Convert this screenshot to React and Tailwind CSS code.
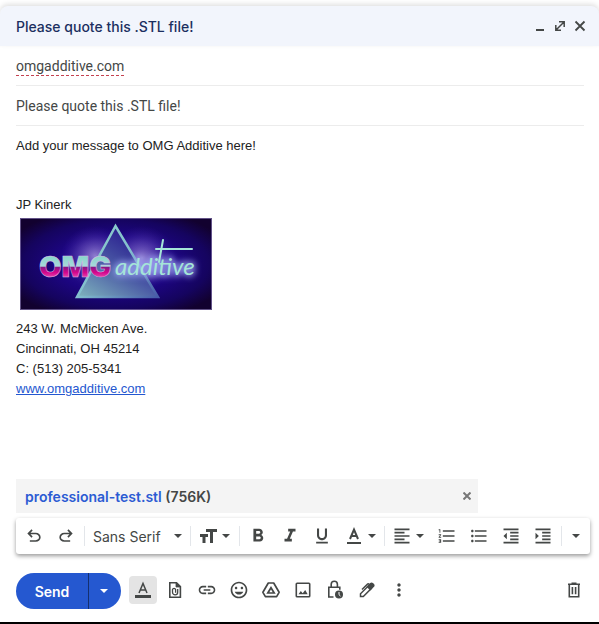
import {
  MdFormatAlignLeft,
  MdFormatBold,
  MdFormatIndentDecrease,
  MdFormatIndentIncrease,
  MdFormatItalic,
  MdFormatListBulleted,
  MdFormatListNumbered,
  MdFormatUnderlined,
  MdLink,
  MdMoreVert,
  MdOutlineInsertEmoticon,
} from "react-icons/md";

const ui = "font-['Inter','Liberation_Sans',sans-serif]";

function Caret({ className = "" }) {
  return (
    <svg viewBox="0 0 8 4" className={`h-1 w-2 shrink-0 ${className}`} fill="currentColor">
      <path d="M0 0h8L4 4z" />
    </svg>
  );
}

function Tool({ label, className = "w-8", children }) {
  return (
    <button type="button" aria-label={label} className={`flex h-7 shrink-0 items-center justify-center ${className}`}>
      {children}
    </button>
  );
}

function Divider() {
  return <span className="h-5 w-px shrink-0 bg-[#e3e6ea]" />;
}

function UndoIcon({ flip }) {
  return (
    <svg viewBox="0 -960 960 960" className={`size-5 ${flip ? "-scale-x-100" : ""}`} fill="currentColor">
      <path d="M280-200v-80h284q63 0 109.5-40T720-420q0-60-46.5-100T564-560H312l104 104-56 56-200-200 200-200 56 56-104 104h252q97 0 166.5 63T800-420q0 94-69.5 157T564-200H280Z" />
    </svg>
  );
}

function SizeIcon() {
  return (
    <svg viewBox="0 0 18 14" className="h-[14px] w-[18px]" fill="currentColor">
      <path d="M6 0h11v3h-4v11h-3V3H6zM0 5h8v3H5.500v6H2.500V8H0z" />
    </svg>
  );
}

function TextColorIcon({ light }) {
  return (
    <svg viewBox="0 0 20 20" className="size-5" fill="none" stroke="currentColor">
      <path d="M6 13 10 3.500 14 13M7.300 10h5.400" strokeWidth={light ? 1.500 : 2} />
      <path d={light ? "M2 16.500h16" : "M3 17h14"} strokeWidth={light ? 3 : 2} />
    </svg>
  );
}

function AttachIcon() {
  return (
    <svg viewBox="0 0 20 20" className="size-5" fill="none" stroke="currentColor" strokeWidth="1.600">
      <path d="M4.800 2.800h6.700l3.900 3.900v10.500H4.800z" />
      <path d="M11 2.500v4.500h4.700z" fill="currentColor" strokeWidth="0.800" />
      <path d="M12.700 9v3.300a2.600 2.600 0 0 1-5.200 0V9.500a1.600 1.600 0 0 1 3.100 0v3.300" strokeWidth="1.300" />
    </svg>
  );
}

function DriveIcon() {
  return (
    <svg viewBox="0 0 20 20" className="size-5" fill="none" stroke="currentColor" strokeWidth="1.700" strokeLinejoin="round">
      <path d="M7.300 3h5.400l5.400 9.300-2.500 4.400H4.400l-2.500-4.400z" />
      <path d="M10 7.700 13.200 13H6.800z" strokeLinejoin="miter" />
    </svg>
  );
}

function PhotoIcon() {
  return (
    <svg viewBox="0 0 20 20" className="size-5" fill="none" stroke="currentColor" strokeWidth="1.600">
      <rect x="3.300" y="3.300" width="13.400" height="13.400" rx="0.800" />
      <path d="m5.500 14.300 2.300-3.300 1.900 2.200 2.500-3.200 2.500 4.300z" fill="currentColor" stroke="none" />
    </svg>
  );
}

function LockClockIcon() {
  return (
    <svg viewBox="0 0 20 20" className="size-5" fill="none" stroke="currentColor" strokeWidth="1.600">
      <path d="M8.500 17H3.800V7.300h11v2.400" />
      <path d="M6.200 7V4.300a3.100 3.100 0 0 1 6.200 0V7" />
      <circle cx="14" cy="14.500" r="4" fill="currentColor" stroke="none" />
      <path d="M14 12v2.700l1.500 1.400" stroke="white" strokeWidth="1" />
    </svg>
  );
}

function PenIcon() {
  return (
    <svg viewBox="0 0 20 20" className="size-5" fill="none" stroke="currentColor" strokeWidth="1.500">
      <path d="M3.500 16.500v-2.800l8-8 2.800 2.800-8 8z" />
      <path d="m10.500 6.700 3.200-3.200a1.200 1.200 0 0 1 1.700 0l1.100 1.100a1.200 1.200 0 0 1 0 1.700l-3.200 3.200z" fill="currentColor" />
      <path d="m5 9.500 5.300-5.300q.9-.9 1.800 0l.8.800" />
    </svg>
  );
}

function TrashIcon() {
  return (
    <svg viewBox="0 0 20 20" className="size-5" fill="none" stroke="currentColor" strokeWidth="1.600">
      <path d="M4 4.300h12M7.500 3.300h5M5.300 4.500v12.200h9.400V4.500" />
      <path d="M8.400 7v7.300M11.600 7v7.300" />
    </svg>
  );
}

function Logo() {
  return (
    <svg viewBox="0 0 192 92" className="h-[92px] w-[192px]" role="img" aria-label="OMG additive">
      <defs>
        <radialGradient id="sky" cx="50%" cy="50%" r="62%">
          <stop offset="0" stopColor="#3a259f" />
          <stop offset="0.500" stopColor="#1c0580" />
          <stop offset="0.780" stopColor="#15045f" />
          <stop offset="1" stopColor="#12012f" />
        </radialGradient>
        <radialGradient id="glow">
          <stop offset="0" stopColor="#c5b4f0" stopOpacity="0.650" />
          <stop offset="0.500" stopColor="#8b70d8" stopOpacity="0.350" />
          <stop offset="1" stopColor="#4526b0" stopOpacity="0" />
        </radialGradient>
        <linearGradient id="face" x1="0" y1="1" x2="0.700" y2="0">
          <stop offset="0" stopColor="#7fb5bd" />
          <stop offset="0.500" stopColor="#4a59a5" />
          <stop offset="1" stopColor="#22108a" />
        </linearGradient>
        <linearGradient id="edge" x1="0" y1="0" x2="1" y2="1">
          <stop offset="0" stopColor="#8ed2c9" />
          <stop offset="0.500" stopColor="#83bfce" />
          <stop offset="1" stopColor="#465aa8" />
        </linearGradient>
        <linearGradient id="chrome" gradientUnits="userSpaceOnUse" x1="0" y1="38" x2="0" y2="60">
          <stop offset="0" stopColor="#86d5c9" />
          <stop offset="0.460" stopColor="#a8d9da" />
          <stop offset="0.520" stopColor="#8b1685" />
          <stop offset="0.750" stopColor="#d5068d" />
          <stop offset="1" stopColor="#e64fae" />
        </linearGradient>
        <filter id="halo" x="-20%" y="-50%" width="140%" height="200%">
          <feGaussianBlur stdDeviation="3" />
        </filter>
      </defs>
      <rect width="192" height="92" fill="url(#sky)" />
      <ellipse cx="75" cy="38" rx="34" ry="30" fill="url(#glow)" />
      <ellipse cx="122" cy="40" rx="34" ry="32" fill="url(#glow)" />
      <path d="M95.500 8 57 79h81z" fill="url(#face)" stroke="url(#edge)" strokeWidth="2.500" />
      <g fontFamily="Lato, sans-serif" fontStyle="italic" fontSize="24">
        <text x="95" y="57" fill="#b8c8ff" stroke="#a9b4ff" strokeWidth="4" opacity="0.700" filter="url(#halo)">additive</text>
        <text x="95" y="57" fill="#a5e5d8">additive</text>
      </g>
      <path d="M136 31h36M143 22l-4 22" stroke="#a5e5d8" strokeWidth="2" strokeLinecap="round" />
      <text x="19" y="59" fontFamily="Inter, sans-serif" fontWeight="900" fontSize="29" fill="url(#chrome)" stroke="#d9b9e6" strokeWidth="0.500">
        OMG
      </text>
      <rect x="0.500" y="0.500" width="191" height="91" fill="none" stroke="#8475ad" strokeOpacity="0.700" />
    </svg>
  );
}

export default function App() {
  return (
    <div className={`flex min-h-screen flex-col border-b-2 border-black bg-white pt-[6px] text-[#444746] ${ui}`}>
      <header className="flex h-10 items-center justify-between rounded-t-lg bg-[#f2f5fc] pr-[9px] pl-4 shadow-[0_-2px_5px_rgba(0,0,0,0.12)]">
        <h1 className="text-[14px] font-medium text-[#1b2f60]">Please quote this .STL file!</h1>
        <div className="flex">
          <button type="button" aria-label="Minimize" className="flex size-5 items-center justify-center">
            <svg viewBox="0 0 12 12" className="size-3"><path d="M2 9h8v2H2z" fill="currentColor" /></svg>
          </button>
          <button type="button" aria-label="Full screen" className="flex size-5 items-center justify-center">
            <svg viewBox="0 0 12 12" className="size-3" fill="none" stroke="currentColor" strokeWidth="1.500">
              <path d="M5 1.800h5.200V7M1.800 5v5.200H7M10 2 2 10" />
            </svg>
          </button>
          <button type="button" aria-label="Close" className="flex size-5 items-center justify-center">
            <svg viewBox="0 0 12 12" className="size-3" fill="none" stroke="currentColor" strokeWidth="1.800">
              <path d="m1.500 1.500 9 9M10.500 1.500l-9 9" />
            </svg>
          </button>
        </div>
      </header>

      <div className="mr-[15px] ml-4 flex h-10 items-center border-b border-[#ececec] pt-[2px] font-['Roboto',sans-serif] text-[14px]">
        <span className="border-b border-dashed border-[#c5404f] leading-[18px]">omgadditive.com</span>
      </div>
      <div className="mr-[15px] ml-4 flex h-10 items-center border-b border-[#ececec] pt-[2px] font-['Roboto',sans-serif]">
        <input aria-label="Subject" defaultValue="Please quote this .STL file!" className="w-full text-[14px] outline-none" />
      </div>

      <main className="flex-1 px-4 pt-[10px] font-['Liberation_Sans',Arial,sans-serif] text-[13px] leading-5 text-[#222222]">
        <p>Add your message to OMG Additive here!</p>
        <div className="mt-[39px]">
          <p>JP Kinerk</p>
          <div className="mt-[3px] mb-[9px] pl-1">
            <Logo />
          </div>
          <p>243 W. McMicken Ave.</p>
          <p>Cincinnati, OH 45214</p>
          <p>C: (513) 205-5341</p>
          <a href="#site" className="text-[#2457d0] underline">www.omgadditive.com</a>
        </div>
      </main>

      <div className="ml-4 flex h-[34px] max-w-[462px] items-center justify-between bg-[#f4f4f4] pr-[6px] pl-[9px] text-[14px] font-semibold">
        <span>
          <a href="#file" className="text-[#2b5bd3]">professional-test.stl</a> (756K)
        </span>
        <button type="button" aria-label="Remove attachment" className="flex h-5 w-[10px] items-center justify-center text-[#777777]">
          <svg viewBox="0 0 8 8" className="size-2 shrink-0" fill="none" stroke="currentColor" strokeWidth="2">
            <path d="m0.500 0.500 7 7M7.500 0.500l-7 7" />
          </svg>
        </button>
      </div>

      <div className="mt-[5px] mr-[9px] ml-4 flex h-9 items-center justify-between rounded-[3px] bg-white pr-[6px] pl-[2px] shadow-[0_2px_4px_rgba(0,0,0,0.4)]">
        <div className="flex items-center">
          <Tool label="Undo"><UndoIcon /></Tool>
          <Tool label="Redo"><UndoIcon flip /></Tool>
          <span className="w-[2px]" />
          <Divider />
          <button type="button" className="flex h-7 w-[105px] items-center justify-between pr-2 pl-2 text-[14px]">
            Sans Serif <Caret />
          </button>
          <Divider />
          <Tool label="Size" className="w-12 gap-1"><SizeIcon /><Caret /></Tool>
          <Divider />
          <span className="w-[2px]" />
          <Tool label="Bold"><MdFormatBold size={22} /></Tool>
          <Tool label="Italic"><MdFormatItalic size={22} /></Tool>
          <Tool label="Underline"><MdFormatUnderlined size={20} /></Tool>
          <Tool label="Text color" className="w-11 gap-1"><TextColorIcon /><Caret /></Tool>
          <span className="w-[2px]" />
          <Divider />
          <Tool label="Align" className="w-[46px] gap-1"><MdFormatAlignLeft size={20} /><Caret /></Tool>
          <Tool label="Numbered list"><MdFormatListNumbered size={20} /></Tool>
          <Tool label="Bulleted list"><MdFormatListBulleted size={20} /></Tool>
          <Tool label="Indent less"><MdFormatIndentDecrease size={20} /></Tool>
          <Tool label="Indent more"><MdFormatIndentIncrease size={20} /></Tool>
        </div>
        <div className="flex items-center">
          <Divider />
          <Tool label="More formatting" className="w-[22px] pl-[6px]"><Caret /></Tool>
        </div>
      </div>

      <footer className="mt-[19px] mb-[13px] flex h-9 items-center pr-[9px] pl-4">
        <div className="mr-2 flex h-9 overflow-hidden rounded-full bg-[#2558d0] text-white">
          <button type="button" className="w-[72px] text-[14px] font-semibold">Send</button>
          <button type="button" aria-label="More send options" className="flex w-[33px] items-center border-l border-[#15306f] pl-[11px]">
            <Caret />
          </button>
        </div>
        <div className="flex flex-1 items-center pb-[2px]">
          <button type="button" aria-label="Formatting options" className="mr-[2px] flex size-7 items-center justify-center rounded bg-[#e4e4e4]">
            <TextColorIcon light />
          </button>
          <Tool label="Attach files"><AttachIcon /></Tool>
          <Tool label="Insert link"><MdLink size={20} /></Tool>
          <Tool label="Insert emoji"><MdOutlineInsertEmoticon size={20} /></Tool>
          <Tool label="Insert from Drive"><DriveIcon /></Tool>
          <Tool label="Insert photo"><PhotoIcon /></Tool>
          <Tool label="Confidential mode"><LockClockIcon /></Tool>
          <Tool label="Insert signature"><PenIcon /></Tool>
          <Tool label="More options"><MdMoreVert size={20} /></Tool>
          <span className="flex-1" />
          <Tool label="Discard draft"><TrashIcon /></Tool>
        </div>
      </footer>
    </div>
  );
}
